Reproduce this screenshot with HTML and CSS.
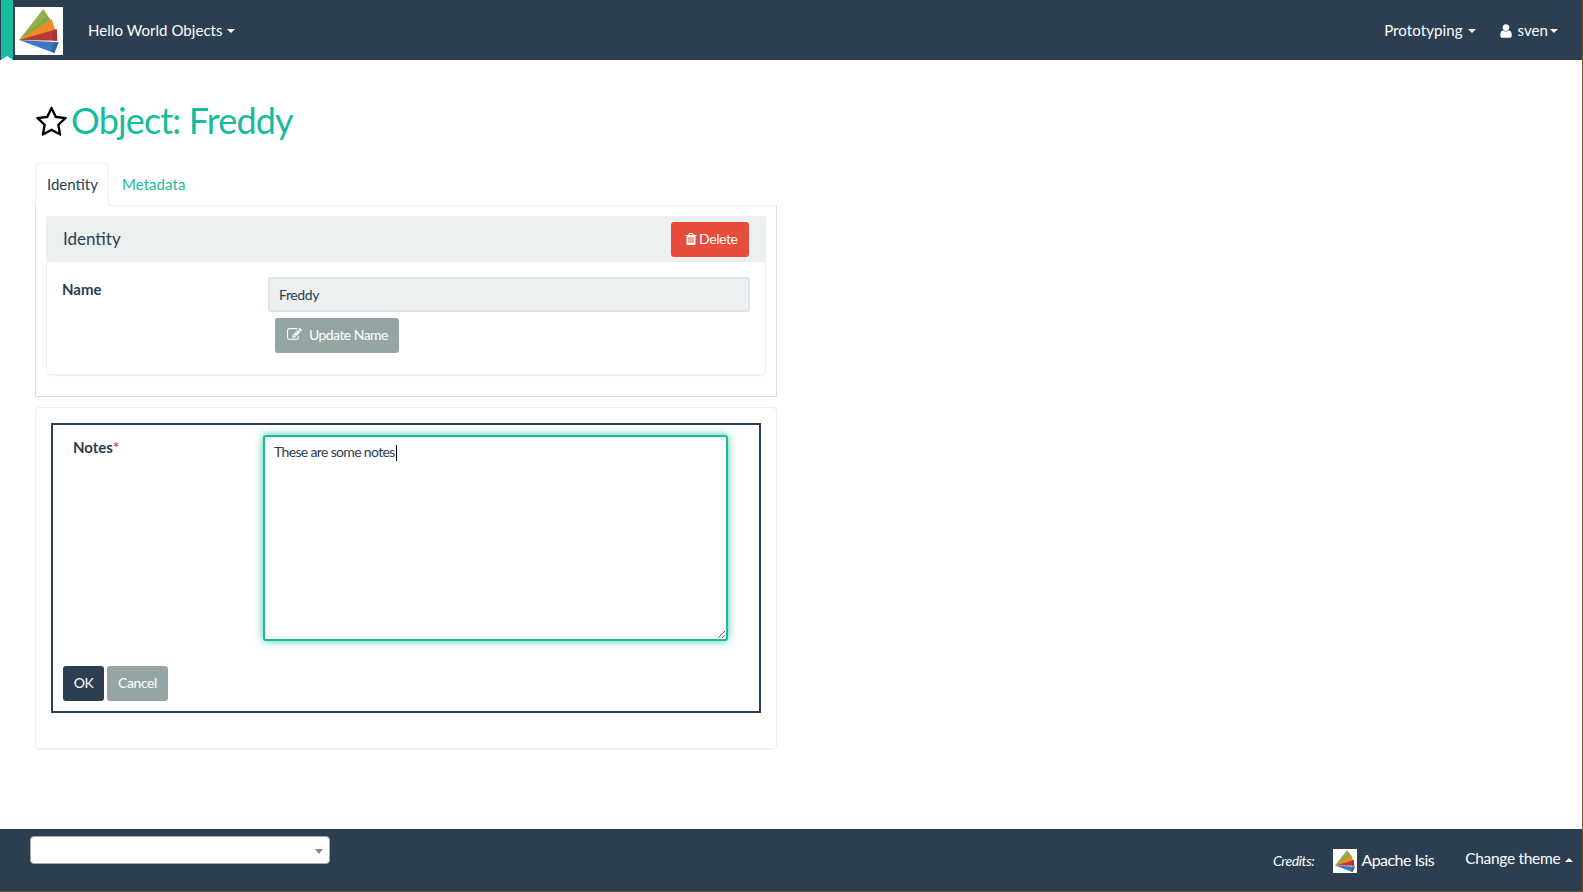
FILE: index.html
```html
<!DOCTYPE html>
<html lang="en">
<head>
<meta charset="utf-8">
<title>Object: Freddy</title>
<link rel="stylesheet" href="styles.css">
</head>
<body>
<svg class="defs" width="0" height="0" aria-hidden="true">
  <defs>
    <symbol id="isis" viewBox="0 0 48 48">
      <rect width="48" height="48" fill="#fff"/>
      <polygon points="4,33 28.3,2 35,12 36,15" fill="#8fb04a"/>
      <polygon points="4,33 32,9 35,12 12,28" fill="#86a644"/>
      <polygon points="4,33 36.7,12 40,22.3 41,26" fill="#ef8b25"/>
      <polygon points="4,33 41.7,22.3 42.3,33.7" fill="#b93a3a"/>
      <polygon points="4,33 43.7,35.3 39.3,46" fill="#3b78c2"/>
      <polygon points="37,23.6 41.7,22.3 42.3,33.7 38,33.4" fill="#a73434"/>
      <polygon points="39,34.9 43.7,35.3 39.3,46 36,44.8" fill="#33689f"/>
    </symbol>
    <symbol id="fa-user" viewBox="0 0 1792 1792"><path d="M1536 1399q0 109-62.5 187t-150.5 78h-854q-88 0-150.5-78t-62.5-187q0-85 8.5-160.5t31.5-152 58.5-131 94-89 134.5-34.5q131 128 313 128t313-128q76 0 134.5 34.5t94 89 58.5 131 31.5 152 8.5 160.5zm-256-887q0 159-112.5 271.5t-271.5 112.5-271.5-112.5-112.5-271.5 112.5-271.5 271.5-112.5 271.5 112.5 112.5 271.5z"/></symbol>
    <symbol id="fa-trash" viewBox="0 0 1792 1792"><path d="M704 1376v-704q0-14-9-23t-23-9h-64q-14 0-23 9t-9 23v704q0 14 9 23t23 9h64q14 0 23-9t9-23zm256 0v-704q0-14-9-23t-23-9h-64q-14 0-23 9t-9 23v704q0 14 9 23t23 9h64q14 0 23-9t9-23zm256 0v-704q0-14-9-23t-23-9h-64q-14 0-23 9t-9 23v704q0 14 9 23t23 9h64q14 0 23-9t9-23zm-544-992h448l-48-117q-7-9-17-11h-317q-10 2-17 11zm928 32v64q0 14-9 23t-23 9h-96v948q0 83-47 143.5t-113 60.5h-832q-66 0-113-58.5t-47-141.5v-952h-96q-14 0-23-9t-9-23v-64q0-14 9-23t23-9h309l70-167q15-37 54-63t79-26h320q40 0 79 26t54 63l70 167h309q14 0 23 9t9 23z"/></symbol>
    <symbol id="fa-edit" viewBox="0 0 1792 1792"><path d="M888 1184l116-116-152-152-116 116v56h96v96h56zm440-720q-16-16-33 1l-350 350q-17 17-1 33t33-1l350-350q17-17 1-33zm80 594v190q0 119-84.5 203.5t-203.5 84.5h-832q-119 0-203.5-84.5t-84.5-203.5v-832q0-119 84.5-203.5t203.5-84.5h832q63 0 117 25 15 7 18 23 3 17-9 29l-49 49q-14 14-32 8-23-6-45-6h-832q-66 0-113 47t-47 113v832q0 66 47 113t113 47h832q66 0 113-47t47-113v-126q0-13 9-22l64-64q15-15 35-7t20 29zm-96-738l288 288-672 672h-288v-288zm444 132l-92 92-288-288 92-92q28-28 68-28t68 28l152 152q28 28 28 68t-28 68z"/></symbol>
    <symbol id="fa-star-o" viewBox="0 0 1792 1792"><path d="M1201 1004l306-297-422-62-189-382-189 382-422 62 306 297-73 421 378-199 377 199zm527-357q0 22-26 48l-363 354 86 500q1 7 1 20 0 50-41 50-19 0-40-12l-449-236-449 236q-22 12-40 12-21 0-31.5-14.5t-10.5-35.5q0-6 2-20l86-500-364-354q-25-27-25-48 0-37 56-46l502-73 225-455q19-41 49-41t49 41l225 455 502 73q56 9 56 46z"/></symbol>
  </defs>
</svg>
<div class="page">
  <header class="navbar">
    <span class="ribbon"></span>
    <svg class="logo"><use href="#isis"/></svg>
    <a class="nav-link brand-menu">Hello World Objects <span class="caret"></span></a>
    <span class="spacer"></span>
    <a class="nav-link proto-menu">Prototyping <span class="caret"></span></a>
    <a class="nav-link user-menu"><svg class="icon-user"><use href="#fa-user"/></svg><span class="user-name">sven</span><span class="caret caret-tight"></span></a>
  </header>

  <main class="content">
    <h1 class="title"><svg class="icon-star"><use href="#fa-star-o"/></svg><span>Object: Freddy</span></h1>

    <ul class="tabs">
      <li class="tab tab-active">Identity</li>
      <li class="tab tab-link">Metadata</li>
    </ul>

    <section class="tab-pane">
      <div class="panel">
        <div class="panel-heading">
          <span class="panel-title">Identity</span>
          <button class="btn btn-danger" type="button"><svg class="icon-trash"><use href="#fa-trash"/></svg>Delete</button>
        </div>
        <div class="panel-body">
          <label class="field-label name-label">Name</label>
          <div class="name-field">
            <input class="input-disabled" type="text" value="Freddy" readonly>
            <button class="btn btn-default btn-update" type="button"><svg class="icon-edit"><use href="#fa-edit"/></svg>Update Name</button>
          </div>
        </div>
      </div>
    </section>

    <section class="notes-card">
      <form class="notes-form">
        <div class="notes-row">
          <label class="field-label notes-label">Notes<span class="required">*</span></label>
          <div class="notes-field">
            <textarea class="notes-input">These are some notes</textarea>
            <span class="text-caret"></span>
          </div>
        </div>
        <div class="form-actions">
          <button class="btn btn-primary" type="button">OK</button>
          <button class="btn btn-default" type="button">Cancel</button>
        </div>
      </form>
    </section>
  </main>

  <footer class="footer">
    <div class="bookmark-select"><span class="select-arrow"></span></div>
    <span class="spacer"></span>
    <em class="credits">Credits:</em>
    <svg class="logo-small"><use href="#isis"/></svg>
    <span class="apache">Apache Isis</span>
    <span class="theme">Change theme <span class="caret caret-up"></span></span>
  </footer>
</div>
</body>
</html>
```
FILE: styles.css
```css
* { box-sizing: border-box; }

html {
  background: #6e5a32;
  height: 100%;
}

body {
  margin: 0;
  font-family: Lato, "Liberation Sans", sans-serif;
  font-size: 15px;
  line-height: 21px;
  color: #2c3e50;
}

.defs { display: block; height: 0; }

.page {
  width: 1582px;
  height: 891px;
  background: #fff;
  display: flex;
  flex-direction: column;
  overflow: hidden;
}

.spacer { flex: 1; }

/* Navbar */
.navbar {
  position: relative;
  flex: none;
  height: 60px;
  background: #2c3e50;
  color: #fff;
  display: flex;
  align-items: center;
  padding-left: 15px;
}

.ribbon {
  position: absolute;
  left: 1px;
  top: 0;
  width: 12px;
  height: 60px;
  background: #18bc9c;
}

.ribbon::after {
  content: "";
  position: absolute;
  left: 0;
  bottom: 0;
  border-bottom: 4px solid #fff;
  border-left: 6px solid transparent;
  border-right: 6px solid transparent;
}

.logo { width: 48px; height: 48px; flex: none; display: block; margin-top: 2px; }

.nav-link {
  color: #fff;
  display: flex;
  align-items: center;
  white-space: pre;
  margin-top: 1px;
  letter-spacing: .05px;
}

.brand-menu { margin-left: 25px; }
.proto-menu { margin-right: 22px; letter-spacing: .1px; }
.user-menu { margin-right: 24px; }

.caret {
  display: inline-block;
  width: 0;
  height: 0;
  margin-left: 1px;
  border-top: 4px solid #fff;
  border-left: 4px solid transparent;
  border-right: 4px solid transparent;
}

.caret-tight { margin-left: 2px; }

.caret-up {
  border-top: 0;
  border-bottom: 4px solid #fff;
  vertical-align: 2px;
}

.icon-user { width: 16px; height: 16px; fill: #fff; margin-right: 4px; }
.user-name { display: inline-block; }

/* Content */
.content {
  flex: 1;
  padding: 0 35px;
  width: 812px;
}

.title {
  margin: 40px 0 23px;
  height: 40px;
  display: flex;
  align-items: center;
  font-size: 36px;
  line-height: 40px;
  font-weight: 400;
  color: #18bc9c;
  letter-spacing: -.85px;
}

.icon-star { width: 33px; height: 33px; fill: #000; margin: 4px 3px 0 0; flex: none; }

.tabs {
  list-style: none;
  margin: 0;
  padding: 0;
  display: flex;
  height: 43px;
  align-items: flex-start;
}

.tab {
  height: 43px;
  padding: 10px 10px 0;
  font-size: 15px;
}

.tab-active {
  width: 74px;
  padding-left: 11px;
  background: #fff;
  border: 1px solid #ecf0f1;
  border-bottom: 0;
  border-radius: 4px 4px 0 0;
  position: relative;
  z-index: 1;
}

.tab-link { color: #18bc9c; padding-left: 13px; padding-top: 11px; letter-spacing: .05px; }

.tab-pane {
  height: 192px;
  margin-top: -1px;
  padding: 10px;
  border: 1px solid #dcdfe0;
  border-top-color: #ecf0f1;
}

.panel {
  height: 159px;
  border: 1px solid #ecf0f1;
  border-radius: 4px;
  box-shadow: 0 1px 1px rgba(0, 0, 0, .05);
}

.panel-heading {
  height: 46px;
  margin: -1px -1px 0;
  background: #ecf0f1;
  border-radius: 3px 3px 0 0;
  display: flex;
  align-items: flex-start;
  justify-content: space-between;
  padding: 6px 17px 0 17px;
}

.panel-title { font-size: 17px; line-height: 33px; margin-top: 0; }

.panel-body {
  display: flex;
  padding: 15px 15px 0 15px;
}

.field-label { font-weight: 700; font-size: 15px; }
.name-label { width: 206px; flex: none; margin-top: 2px; }

.name-field { width: 482px; flex: none; display: flex; flex-direction: column; align-items: flex-start; }

.input-disabled {
  width: 482px;
  height: 35px;
  border: 2px solid #dce4ec;
  border-radius: 3px;
  background: #ecf0f1;
  color: #2c3e50;
  padding: 0 9px;
  font: 14px Lato, "Liberation Sans", sans-serif;
  letter-spacing: -.4px;
  outline: none;
}

.btn {
  height: 35px;
  border: 0;
  border-radius: 3px;
  color: #fff;
  font: 14px Lato, "Liberation Sans", sans-serif;
  letter-spacing: -.4px;
  padding: 0 11px 2px;
  display: inline-flex;
  align-items: center;
  margin: 0;
  white-space: nowrap;
}

.btn-danger { background: #e74c3c; width: 78px; padding: 0 0 2px 13px; }
.btn-default { background: #95a5a6; }
.btn-primary { background: #2c3e50; }

.btn-update { width: 124px; margin: 6px 0 0 7px; padding-left: 12px; letter-spacing: -.55px; }

.icon-trash { width: 14px; height: 14px; fill: #fff; margin-right: 1px; flex: none; }
.icon-edit { width: 15px; height: 15px; fill: #fff; margin-right: 7px; flex: none; }

.notes-card {
  height: 342px;
  margin-top: 10px;
  padding: 15px;
  border: 1px solid #ecf0f1;
  border-radius: 4px;
  box-shadow: 0 1px 1px rgba(0, 0, 0, .05);
}

.notes-form {
  width: 710px;
  height: 290px;
  border: 2px solid #2c3e50;
  padding: 10px;
}

.notes-row { display: flex; }

.notes-label { width: 200px; flex: none; padding-left: 10px; margin-top: 2px; }

.required { color: #d4497a; font-weight: 700; }

.notes-field { position: relative; width: 465px; height: 206px; flex: none; }

.notes-input {
  display: block;
  width: 465px;
  height: 206px;
  border: 2px solid #18bc9c;
  border-radius: 3px;
  outline: none;
  padding: 4px 9px;
  font: 14px/21px Lato, "Liberation Sans", sans-serif;
  letter-spacing: -.65px;
  color: #2c3e50;
  box-shadow: inset 0 1px 1px rgba(0, 0, 0, .075), 0 0 8px rgba(24, 188, 156, .8);
}

.text-caret {
  position: absolute;
  left: 133px;
  top: 10px;
  width: 1px;
  height: 16px;
  background: #000;
}

.form-actions { display: flex; gap: 3px; margin-top: 25px; }
.form-actions .btn-primary { width: 41px; padding: 0 0 2px; justify-content: center; }
.form-actions .btn-default { width: 61px; padding: 0 0 2px; justify-content: center; }

/* Footer */
.footer {
  flex: none;
  height: 62px;
  background: #2c3e50;
  color: #fff;
  display: flex;
  align-items: flex-start;
  padding: 7px 9px 0 30px;
}

.bookmark-select {
  position: relative;
  width: 300px;
  height: 28px;
  background: #fff;
  border: 1px solid #aaa;
  border-radius: 4px;
}

.select-arrow {
  position: absolute;
  right: 6px;
  top: 12px;
  width: 0;
  height: 0;
  border-top: 5px solid #888;
  border-left: 4px solid transparent;
  border-right: 4px solid transparent;
}

.credits { font-size: 14px; letter-spacing: -.4px; margin: 14px 19px 0 0; }
.logo-small { width: 24px; height: 24px; margin: 13px 4px 0 0; flex: none; }
.apache { font-size: 16px; letter-spacing: -.55px; margin: 13px 31px 0 0; }
.theme { font-size: 15.5px; letter-spacing: -.3px; margin-top: 12px; white-space: pre; }
```
